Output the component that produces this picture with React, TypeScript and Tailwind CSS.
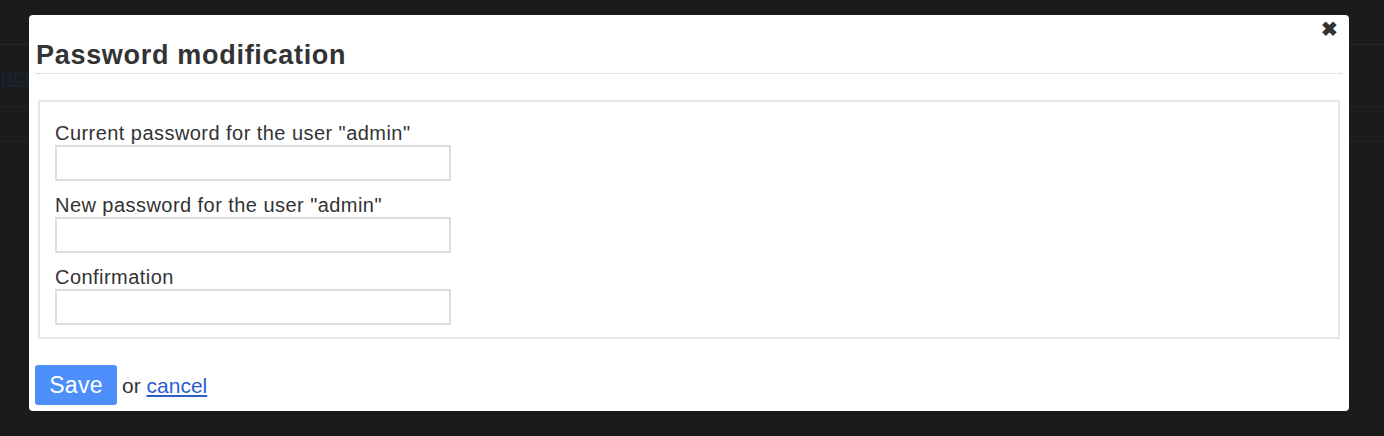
import { useState } from "react";

const FIELDS = [
  { id: "current", label: 'Current password for the user "admin"' },
  { id: "new", label: 'New password for the user "admin"' },
  { id: "confirm", label: "Confirmation" },
];

function PasswordField({ label, value, onChange }: { label: string; value: string; onChange: (v: string) => void }) {
  return (
    <div className="flex flex-col">
      <label className="text-[20px] leading-[22px] tracking-[0.45px] text-[#333]">{label}</label>
      <input
        type="password"
        value={value}
        onChange={(e) => onChange(e.target.value)}
        className="mt-[1px] h-[36px] w-[396px] border-2 border-[#dcdcdc] bg-white px-2 outline-none"
      />
    </div>
  );
}

export default function App() {
  const [values, setValues] = useState<Record<string, string>>({ current: "", new: "", confirm: "" });

  return (
    <div className="relative h-[436px] w-[1384px] overflow-hidden bg-[#1b1b1b] font-['Liberation_Sans',Arial,sans-serif]">
      {/* dimmed page behind the dialog */}
      <div className="flex flex-col">
        <div className="h-[45px] border-b border-[#262626]" />
        <div className="flex h-[62px] items-center border-b border-[#232323]">
          <a className="ml-[1px] text-[21px] text-[#1c2236] underline">pen</a>
        </div>
        <div className="h-[35px] border-b border-[#232323]" />
      </div>

      <div className="absolute left-[29px] top-[15px] flex h-[396px] w-[1320px] flex-col rounded-[4px] bg-white px-[7px]">
        <button className="absolute right-[11px] top-[4px] text-[20px] font-bold leading-none text-[#333]">✖</button>
        <h2 className="mt-[25px] border-b border-dotted border-[#c4c4c4] pb-[3px] text-[27px] font-bold leading-[30px] tracking-[0.7px] text-[#333]">
          Password modification
        </h2>
        <div className="mx-[2px] mt-[26px] flex h-[239px] flex-col gap-[13px] border-2 border-[#e6e6e6] px-[15px] pt-[20px]">
          {FIELDS.map((f) => (
            <PasswordField
              key={f.id}
              label={f.label}
              value={values[f.id]}
              onChange={(v) => setValues({ ...values, [f.id]: v })}
            />
          ))}
        </div>
        <div className="ml-[-1px] mt-[26px] flex items-center">
          <button className="h-[40px] w-[82px] rounded-[3px] bg-[#4c8ffb] text-[23px] tracking-[0.3px] text-white">Save</button>
          <span className="ml-[5px] mt-[2px] text-[21px] text-[#333]">
            or{" "}
            <a href="#" className="text-[#2d5ccc] underline">
              cancel
            </a>
          </span>
        </div>
      </div>
    </div>
  );
}
